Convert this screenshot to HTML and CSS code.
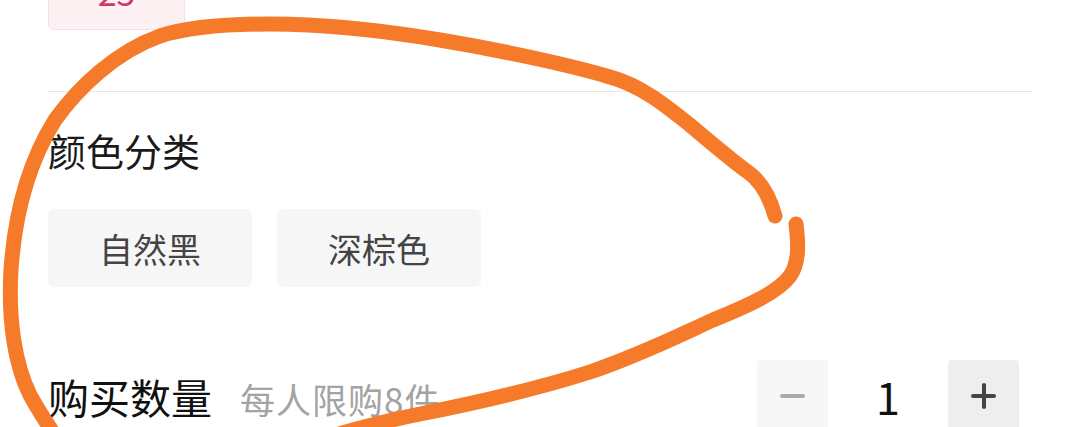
FILE: index.html
```html
<!DOCTYPE html>
<html lang="zh-CN">
<head>
<meta charset="utf-8">
<title>商品规格</title>
<link rel="stylesheet" href="styles.css">
</head>
<body>
<div class="page">
  <div class="size-row">
    <span class="tag tag-active">25</span>
  </div>
  <div class="divider"></div>
  <section class="group">
    <h2 class="group-title">颜色分类</h2>
    <div class="options">
      <button class="opt">自然黑</button>
      <button class="opt">深棕色</button>
    </div>
  </section>
  <div class="qty-row">
    <div class="qty-label">
      <span class="qty-title">购买数量</span>
      <span class="qty-limit">每人限购8件</span>
    </div>
    <div class="stepper">
      <button class="step step-minus" aria-label="减少"><span class="bar-h"></span></button>
      <span class="num">1</span>
      <button class="step step-plus" aria-label="增加"><span class="bar-h"></span><span class="bar-v"></span></button>
    </div>
  </div>
</div>
<svg class="annot" width="1080" height="427" viewBox="0 0 1080 427" aria-hidden="true">
  <path d="M775,216 C770,198 762,182 748,172 C735,163 715,146 690,125 C665,105 640,85 610,77 C570,65 500,50 440,40 C380,30 320,24 270,24 C220,24 185,28 160,36 C115,52 78,88 55,120 C30,160 15,210 11,270 C8,320 15,365 30,395 C38,410 48,425 58,440"/>
  <path d="M796,224 C798,240 800,262 790,276 C778,292 750,305 713,320 C680,335 640,355 590,372 C540,388 480,402 420,414 C380,422 350,430 320,440"/>
</svg>
</body>
</html>
```
FILE: styles.css
```css
html, body {
  margin: 0;
  padding: 0;
  background: #ffffff;
}
body {
  width: 1080px;
  height: 427px;
  overflow: hidden;
  position: relative;
  font-family: "Noto Sans CJK SC", "Noto Sans", sans-serif;
  color: #222;
}
.page {
  padding: 0 48px;
}
.size-row {
  display: flex;
  margin-top: -47px;
}
.tag {
  box-sizing: border-box;
  width: 137px;
  height: 77px;
  display: flex;
  align-items: center;
  justify-content: center;
  border-radius: 6px;
  font-size: 34px;
}
.tag-active {
  background: #fdf1f4;
  border: 1px solid #f6dfe5;
  color: #d0386b;
}
.divider {
  margin-top: 61px;
  height: 1px;
  background: #e6e6e6;
}
.group-title {
  margin: 35px 0 0;
  font-size: 38px;
  line-height: 46px;
  font-weight: 400;
  color: #1a1a1a;
}
.options {
  display: flex;
  gap: 25px;
  margin-top: 36px;
}
.opt {
  box-sizing: border-box;
  width: 204px;
  height: 78px;
  border: none;
  border-radius: 6px;
  background: #f6f6f6;
  font-family: inherit;
  font-size: 34px;
  color: #444;
  padding: 0;
}
.qty-row {
  display: flex;
  align-items: center;
  justify-content: space-between;
  margin-top: 73px;
}
.qty-label {
  display: flex;
  align-items: baseline;
  gap: 28px;
}
.qty-title {
  font-size: 41px;
  color: #111;
}
.qty-limit {
  font-size: 35px;
  letter-spacing: 1px;
  color: #a3a3a3;
}
.stepper {
  display: flex;
  align-items: center;
  margin-right: 13px;
}
.step {
  position: relative;
  width: 71px;
  height: 72px;
  border: none;
  border-radius: 4px;
  padding: 0;
}
.step-minus {
  background: #f7f7f7;
}
.step-plus {
  background: #eeeeee;
}
.bar-h, .bar-v {
  position: absolute;
  left: 50%;
  top: 50%;
  border-radius: 2px;
}
.bar-h {
  width: 25px;
  height: 4px;
  margin: -2px 0 0 -12.5px;
}
.bar-v {
  width: 4px;
  height: 26px;
  margin: -13px 0 0 -2px;
}
.step-minus .bar-h {
  background: #ababab;
}
.step-plus .bar-h, .step-plus .bar-v {
  background: #444;
}
.num {
  width: 120px;
  text-align: center;
  font-size: 43px;
  color: #111;
}
.annot {
  position: absolute;
  left: 0;
  top: 0;
  pointer-events: none;
}
.annot path {
  fill: none;
  stroke: #f57a29;
  stroke-width: 15;
  stroke-linecap: round;
  stroke-linejoin: round;
}
```
